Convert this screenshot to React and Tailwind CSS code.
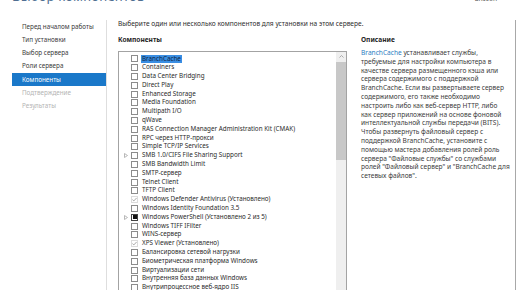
import React from 'react'

const navItems = [
  { label: 'Перед началом работы' },
  { label: 'Тип установки' },
  { label: 'Выбор сервера' },
  { label: 'Роли сервера' },
  { label: 'Компоненты', active: true },
  { label: 'Подтверждение', disabled: true },
  { label: 'Результаты', disabled: true },
]

const features = [
  { label: 'BranchCache', selected: true },
  { label: 'Containers' },
  { label: 'Data Center Bridging' },
  { label: 'Direct Play' },
  { label: 'Enhanced Storage' },
  { label: 'Media Foundation' },
  { label: 'Multipath I/O' },
  { label: 'qWave' },
  { label: 'RAS Connection Manager Administration Kit (CMAK)' },
  { label: 'RPC через HTTP-прокси' },
  { label: 'Simple TCP/IP Services' },
  { label: 'SMB 1.0/CIFS File Sharing Support', expand: true },
  { label: 'SMB Bandwidth Limit' },
  { label: 'SMTP-сервер' },
  { label: 'Telnet Client' },
  { label: 'TFTP Client' },
  { label: 'Windows Defender Antivirus (Установлено)', state: 'checked' },
  { label: 'Windows Identity Foundation 3.5' },
  { label: 'Windows PowerShell (Установлено 2 из 5)', state: 'partial', expand: true },
  { label: 'Windows TIFF IFilter' },
  { label: 'WINS-сервер' },
  { label: 'XPS Viewer (Установлено)', state: 'checked' },
  { label: 'Балансировка сетевой нагрузки' },
  { label: 'Биометрическая платформа Windows' },
  { label: 'Виртуализации сети' },
  { label: 'Внутренняя база данных Windows' },
  { label: 'Внутрипроцессное веб-ядро IIS' },
]

const descLines = [
  'требуемые для настройки компьютера в',
  'качестве сервера размещенного кэша или',
  'сервера содержимого с поддержкой',
  'BranchCache. Если вы развертываете сервер',
  'содержимого, его также необходимо',
  'настроить либо как веб-сервер HTTP, либо',
  'как сервер приложений на основе фоновой',
  'интеллектуальной службы передачи (BITS).',
  'Чтобы развернуть файловый сервер с',
  'поддержкой BranchCache, установите с',
  'помощью мастера добавления ролей роль',
  'сервера "Файловые службы" со службами',
  'ролей "Файловый сервер" и "BranchCache для',
  'сетевых файлов".',
]

function Expander() {
  return (
    <svg width="4" height="5" viewBox="0 0 4 5" className="block">
      <polygon points="0.5,0.5 3.5,2.5 0.5,4.5" fill="none" stroke="#a6a6a6" strokeWidth="0.8" />
    </svg>
  )
}

function Checkbox({ state }) {
  if (state === 'checked') {
    return (
      <div className="w-[7px] h-[7px] border border-[#dcdcdc] bg-white flex items-center justify-center">
        <svg width="6" height="5" viewBox="0 0 6 5" className="block">
          <polyline points="0.5,2.6 2.2,4.2 5.6,0.6" fill="none" stroke="#8a8a8a" strokeWidth="0.9" />
        </svg>
      </div>
    )
  }
  if (state === 'partial') {
    return (
      <div className="w-[7px] h-[7px] border border-[#444] bg-white flex items-center justify-center">
        <div className="w-[4px] h-[4px] bg-[#111]" />
      </div>
    )
  }
  return <div className="w-[7px] h-[7px] border border-[#8c8c8c] bg-white" />
}

function FeatureRow({ item }) {
  return (
    <div className="flex items-center h-[8.8px] whitespace-nowrap">
      <div className="w-[12px] shrink-0 flex justify-end pr-[3px]">{item.expand && <Expander />}</div>
      <div className="w-[11px] shrink-0">
        <Checkbox state={item.state} />
      </div>
      <div className={item.selected ? 'h-[8px] leading-[8px] px-[1px] -ml-[1px] bg-[#3a8ee2] text-[#0d2342]' : 'text-[#2b2b2b]'}>
        {item.label}
      </div>
    </div>
  )
}

function Scrollbar() {
  return (
    <div className="w-[10px] h-[250px] shrink-0 bg-[#efefef] flex flex-col">
      <div className="h-[10px] shrink-0 flex items-center justify-center">
        <svg width="5" height="3" viewBox="0 0 5 3" className="block">
          <polyline points="0.5,2.5 2.5,0.5 4.5,2.5" fill="none" stroke="#9a9a9a" strokeWidth="0.8" />
        </svg>
      </div>
      <div className="h-[98px] shrink-0 bg-[#c8c8c8]" />
      <div className="flex-1" />
      <div className="h-[10px] shrink-0 flex items-center justify-center">
        <svg width="5" height="3" viewBox="0 0 5 3" className="block">
          <polyline points="0.5,0.5 2.5,2.5 4.5,0.5" fill="none" stroke="#9a9a9a" strokeWidth="0.8" />
        </svg>
      </div>
    </div>
  )
}

export default function App() {
  return (
    <div
      className="w-[516px] h-[290px] overflow-hidden bg-white text-[6.6px] leading-[8.8px] text-[#333]"
      style={{ fontFamily: '"Noto Sans", "Open Sans", sans-serif' }}
    >
      {/* Header */}
      <div className="h-[19.5px] flex justify-between overflow-hidden">
        <div className="pl-[12px] -mt-[10px] text-[13px] leading-[13px] text-[#4f6f92] tracking-[0.2px]">
          Выбор компонентов
        </div>
        <div className="pr-[19px] -mt-[5px] text-[6.6px] leading-[8px] text-[#555]">dnscon</div>
      </div>

      {/* Body */}
      <div className="flex h-[271px]">
        {/* Nav */}
        <div className="w-[107px] pl-[12px] border-r border-[#dedede] shrink-0 text-[6.3px]">
          {navItems.map((n) => (
            <div
              key={n.label}
              className={
                'h-[13.3px] leading-[13.3px] pl-[10px] ' +
                (n.active ? 'bg-[#1a78c9] text-white' : n.disabled ? 'text-[#b4b4b4]' : 'text-[#3a3a3a]')
              }
            >
              {n.label}
            </div>
          ))}
        </div>

        {/* Content */}
        <div className="w-[409px] shrink-0 pl-[11px] border-r border-[#a8a8a8]">
          <div className="h-[9px] mt-[0.5px] text-[#2e2e2e] whitespace-nowrap">
            Выберите один или несколько компонентов для установки на этом сервере.
          </div>
          <div className="flex gap-[14px] mt-[7px]">
            {/* Features column */}
            <div className="w-[229px] shrink-0">
              <div className="h-[9px] font-bold text-[#262626]">Компоненты</div>
              <div className="mt-[5.5px] h-[252px] w-[229px] border border-[#a3a3a3] flex">
                <div className="w-[217px] shrink-0 pt-[3px] overflow-hidden text-[6.3px]">
                  {features.map((f) => (
                    <FeatureRow key={f.label} item={f} />
                  ))}
                </div>
                <Scrollbar />
              </div>
            </div>

            {/* Description column */}
            <div className="whitespace-nowrap">
              <div className="h-[9px] font-bold text-[#262626]">Описание</div>
              <div className="mt-[4px] text-[#3c3c3c]">
                <div>
                  <span className="text-[#2a7dc2]">BranchCache</span> устанавливает службы,
                </div>
                {descLines.map((l) => (
                  <div key={l}>{l}</div>
                ))}
              </div>
            </div>
          </div>
        </div>
      </div>
    </div>
  )
}
